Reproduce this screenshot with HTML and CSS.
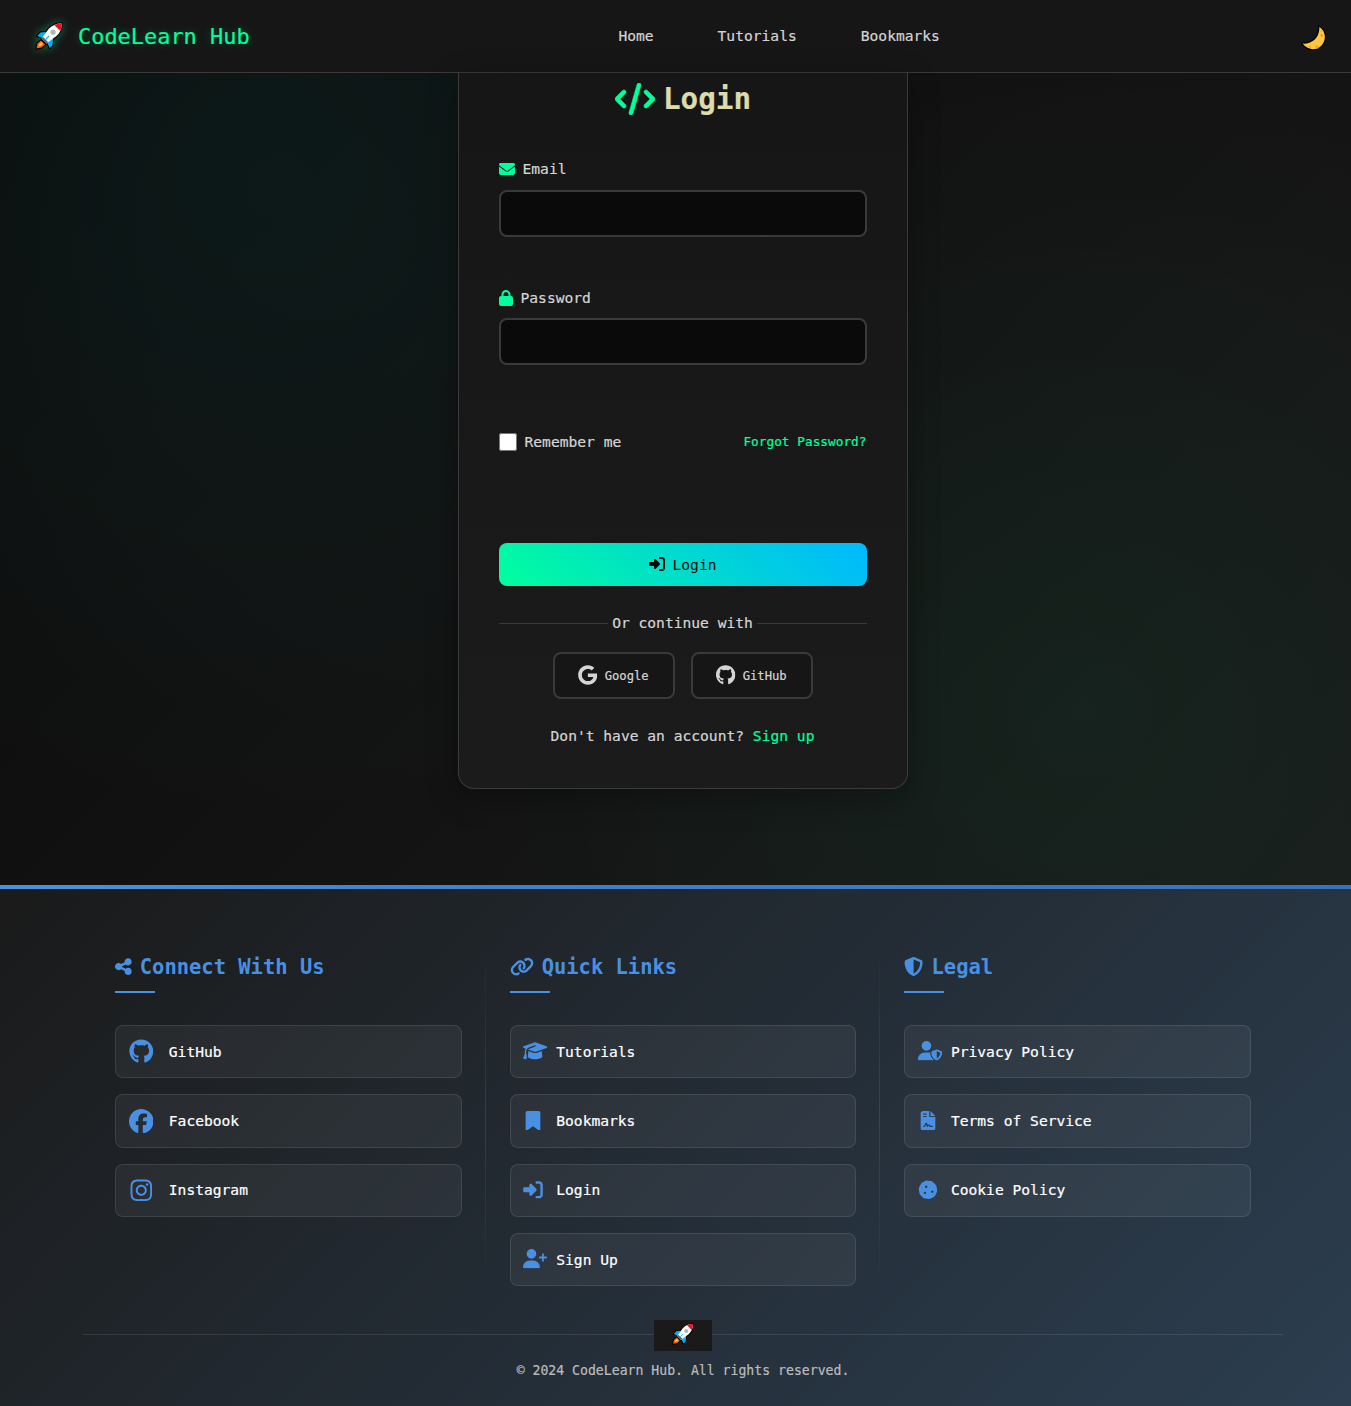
FILE: index.html
```html
<!DOCTYPE html>
<html lang="en">
<head>
<meta charset="utf-8">
<title>Login - CodeLearn Hub</title>
<link rel="stylesheet" href="styles.css">
</head>
<body>
<svg class="sprite" aria-hidden="true">
  <symbol id="rocket" viewBox="0 0 28 28">
    <g stroke="#000" stroke-width="2.4" stroke-linejoin="round">
      <path fill="#00a9ea" d="M10 10L5.5 10.5L2.2 14L6.5 15.5L12.5 21.5L14.8 26L17.5 23.2L18 17z"/>
      <path fill="#f7630c" d="M6 18.5L2.5 21.5L1.5 26.5L6.5 25.5L10 22.5z"/>
      <path fill="#fff" d="M26.6 1.4C21 1.2 17.5 3.2 14 6.5L6.5 16.5L11.5 21.5L21.5 14C25 10.5 26.8 7 26.6 1.4z"/>
    </g>
    <path fill="#00b3f0" d="M10 10L5.5 10.5L2.2 14L6.5 15.5L12.5 21.5L14.8 26L17.5 23.2L18 17z"/>
    <path fill="#f7630c" d="M6 18.5L2.5 21.5L1.5 26.5L6.5 25.5L10 22.5z"/>
    <path fill="#ffc83d" d="M6.5 20L4.2 22L3.6 24.4L6 23.8L8 21.8z"/>
    <path fill="#fff" d="M26.6 1.4C21 1.2 17.5 3.2 14 6.5L6.5 16.5L11.5 21.5L21.5 14C25 10.5 26.8 7 26.6 1.4z"/>
    <path fill="#e81224" d="M26.6 1.4C23.5 1.3 21.2 1.9 19.2 3L25 8.8C26.2 6.5 26.7 4.3 26.6 1.4z"/>
    <path fill="#55606b" d="M7.8 14.8L6.5 16.5L11.5 21.5L13.2 20.2z"/>
    <circle cx="18" cy="10.2" r="2.6" fill="#b4b4b4"/>
    <path stroke="#00b3f0" stroke-width="1.1" d="M10.5 17.5L14.2 13.8"/>
  </symbol>
  <symbol id="moon" viewBox="0 0 26 26">
    <path fill="#ffc83d" stroke="#000" stroke-width="2.6" stroke-linejoin="round" paint-order="stroke" d="M18.4 1.8C23.5 5.5 25.2 11.500 22.800 17C19.500 24.800 8.500 27.500 1.500 18.500C8 19.500 18.800 15 18.400 1.800z"/>
    <g fill="#f5a30f"><circle cx="20.700" cy="10.300" r="1.500"/><circle cx="20" cy="6.200" r=".8"/><circle cx="16.200" cy="22" r="1.800"/><circle cx="9" cy="21.600" r="1.100"/></g>
  </symbol>
  <symbol id="code" viewBox="0 0 640 512"><path d="M392.8 1.2c-17-4.9-34.7 5-39.6 22l-128 448c-4.9 17 5 34.700 22 39.600s34.700-5 39.600-22l128-448c4.900-17-5-34.700-22-39.600zm80.600 120.100c-12.500 12.500-12.500 32.800 0 45.300L562.700 256l-89.400 89.400c-12.500 12.500-12.500 32.800 0 45.300s32.800 12.500 45.300 0l112-112c12.500-12.500 12.500-32.800 0-45.300l-112-112c-12.500-12.500-32.800-12.500-45.300 0zm-306.700 0c-12.500-12.500-32.800-12.500-45.300 0l-112 112c-12.500 12.500-12.500 32.800 0 45.300l112 112c12.500 12.500 32.800 12.500 45.300 0s12.500-32.800 0-45.300L77.300 256l89.400-89.400c12.500-12.500 12.500-32.800 0-45.300z"/></symbol>
  <symbol id="envelope" viewBox="0 0 512 512"><path d="M48 64C21.5 64 0 85.5 0 112c0 15.1 7.1 29.3 19.2 38.4L236.8 313.6c11.4 8.5 27 8.5 38.4 0L492.8 150.4c12.1-9.1 19.2-23.3 19.2-38.4c0-26.5-21.5-48-48-48H48zM0 176V384c0 35.3 28.7 64 64 64H448c35.3 0 64-28.7 64-64V176L294.4 339.2c-22.8 17.1-54 17.1-76.8 0L0 176z"/></symbol>
  <symbol id="lock" viewBox="0 0 448 512"><path d="M144 144v48H304V144c0-44.2-35.8-80-80-80s-80 35.8-80 80zM80 192V144C80 64.5 144.5 0 224 0s144 64.5 144 144v48h16c35.3 0 64 28.7 64 64V448c0 35.3-28.7 64-64 64H64c-35.3 0-64-28.7-64-64V256c0-35.3 28.7-64 64-64H80z"/></symbol>
  <symbol id="signin" viewBox="0 0 512 512"><path d="M217.9 105.9L340.7 228.7c7.2 7.2 11.3 17.1 11.3 27.3s-4.1 20.1-11.3 27.3L217.9 406.1c-6.4 6.4-15 9.900-24 9.900c-18.700 0-33.900-15.200-33.900-33.900l0-62.100L32 320c-17.700 0-32-14.300-32-32l0-64c0-17.700 14.300-32 32-32l128 0 0-62.100c0-18.700 15.200-33.900 33.900-33.900c9 0 17.600 3.600 24 9.900zM352 416l64 0c17.700 0 32-14.300 32-32l0-256c0-17.700-14.300-32-32-32l-64 0c-17.700 0-32-14.300-32-32s14.300-32 32-32l64 0c53 0 96 43 96 96l0 256c0 53-43 96-96 96l-64 0c-17.700 0-32-14.300-32-32s14.300-32 32-32z"/></symbol>
  <symbol id="google" viewBox="0 0 488 512"><path d="M488 261.8C488 403.3 391.1 504 248 504 110.8 504 0 393.2 0 256S110.8 8 248 8c66.8 0 123 24.5 166.3 64.9l-67.5 64.9C258.5 52.6 94.3 116.6 94.3 256c0 86.5 69.1 156.6 153.7 156.6 98.2 0 135-70.4 140.8-106.9H248v-85.3h236.1c2.3 12.7 3.9 24.9 3.9 41.4z"/></symbol>
  <symbol id="github" viewBox="0 0 496 512"><path d="M165.9 397.4c0 2-2.3 3.6-5.2 3.6-3.3.3-5.6-1.3-5.6-3.6 0-2 2.3-3.6 5.2-3.6 3-.3 5.6 1.3 5.6 3.6zm-31.1-4.5c-.7 2 1.3 4.3 4.3 4.9 2.6 1 5.6 0 6.2-2s-1.3-4.3-4.3-5.2c-2.6-.7-5.5.3-6.2 2.3zm44.2-1.7c-2.9.7-4.9 2.6-4.6 4.9.3 2 2.9 3.3 5.9 2.6 2.9-.7 4.9-2.6 4.6-4.6-.3-1.9-3-3.2-5.9-2.9zM244.8 8C106.1 8 0 113.3 0 252c0 110.9 69.8 205.8 169.5 239.2 12.8 2.3 17.3-5.6 17.3-12.1 0-6.2-.3-40.4-.3-61.4 0 0-70 15-84.7-29.8 0 0-11.4-29.1-27.8-36.6 0 0-22.9-15.7 1.6-15.4 0 0 24.9 2 38.6 25.8 21.9 38.6 58.6 27.5 72.9 20.9 2.3-16 8.8-27.1 16-33.7-55.9-6.2-112.3-14.3-112.3-110.5 0-27.5 7.6-41.3 23.6-58.9-2.6-6.5-11.1-33.3 2.6-67.9 20.9-6.5 69 27 69 27 20-5.6 41.5-8.5 62.8-8.5s42.8 2.9 62.8 8.5c0 0 48.1-33.6 69-27 13.7 34.7 5.2 61.4 2.6 67.9 16 17.7 25.8 31.5 25.8 58.9 0 96.5-58.9 104.2-114.8 110.5 9.2 7.9 17 22.9 17 46.4 0 33.7-.3 75.4-.3 83.6 0 6.5 4.6 14.4 17.3 12.1C428.2 457.8 496 362.9 496 252 496 113.3 383.5 8 244.8 8zM97.2 352.9c-1.3 1-1 3.3.7 5.2 1.6 1.6 3.9 2.3 5.2 1 1.3-1 1-3.3-.7-5.2-1.6-1.6-3.9-2.3-5.2-1zm-10.8-8.1c-.7 1.3.3 2.9 2.3 3.9 1.6 1 3.6.7 4.3-.7.7-1.3-.3-2.9-2.3-3.9-2-.6-3.6-.3-4.3.7zm32.4 35.6c-1.6 1.3-1 4.3 1.3 6.2 2.3 2.3 5.2 2.6 6.5 1 1.3-1.3.7-4.3-1.3-6.2-2.2-2.3-5.2-2.6-6.5-1zm-11.4-14.7c-1.6 1-1.6 3.6 0 5.9 1.6 2.3 4.3 3.3 5.6 2.3 1.6-1.3 1.6-3.9 0-6.2-1.4-2.3-4-3.3-5.6-2z"/></symbol>
  <symbol id="facebook" viewBox="0 0 512 512"><path d="M512 256C512 114.6 397.4 0 256 0S0 114.6 0 256C0 376 82.7 476.8 194.2 504.5V334.2H141.4V256h52.8V222.3c0-87.1 39.4-127.5 125-127.5c16.2 0 44.2 3.2 55.7 6.4V172c-6-.6-16.5-1-29.6-1c-42 0-58.2 15.9-58.2 57.2V256h83.6l-14.4 78.2H287V510.1C413.8 494.8 512 386.9 512 256h0z"/></symbol>
  <symbol id="instagram" viewBox="0 0 448 512"><path d="M224.1 141c-63.6 0-114.9 51.3-114.9 114.9s51.3 114.9 114.9 114.9S339 319.5 339 255.9 287.7 141 224.1 141zm0 189.6c-41.1 0-74.7-33.5-74.7-74.7s33.5-74.7 74.7-74.7 74.7 33.5 74.7 74.7-33.6 74.7-74.7 74.7zm146.4-194.3c0 14.9-12 26.8-26.8 26.8-14.9 0-26.8-12-26.8-26.8s12-26.8 26.8-26.8 26.8 12 26.8 26.8zm76.1 27.2c-1.7-35.9-9.900-67.700-36.200-93.900-26.200-26.200-58-34.400-93.900-36.200-37-2.100-147.900-2.100-184.900 0-35.800 1.700-67.600 9.900-93.900 36.100s-34.400 58-36.200 93.900c-2.100 37-2.100 147.900 0 184.900 1.700 35.900 9.900 67.700 36.200 93.900s58 34.400 93.900 36.200c37 2.100 147.900 2.100 184.900 0 35.900-1.700 67.700-9.900 93.900-36.200 26.200-26.200 34.400-58 36.200-93.900 2.100-37 2.100-147.800 0-184.800zM398.800 388c-7.800 19.600-22.900 34.700-42.600 42.600-29.500 11.700-99.500 9-132.100 9s-102.700 2.600-132.100-9c-19.600-7.800-34.700-22.900-42.600-42.600-11.700-29.500-9-99.500-9-132.100s-2.600-102.700 9-132.100c7.800-19.600 22.900-34.700 42.600-42.600 29.500-11.700 99.500-9 132.100-9s102.700-2.600 132.100 9c19.600 7.800 34.700 22.900 42.600 42.600 11.700 29.500 9 99.500 9 132.100s2.700 102.700-9 132.100z"/></symbol>
  <symbol id="share" viewBox="0 0 448 512"><path d="M352 224c53 0 96-43 96-96s-43-96-96-96s-96 43-96 96c0 4 .2 8 .7 11.9l-94.1 47C145.4 170.2 121.9 160 96 160c-53 0-96 43-96 96s43 96 96 96c25.9 0 49.4-10.2 66.6-26.9l94.1 47c-.5 3.9-.7 7.8-.7 11.9c0 53 43 96 96 96s96-43 96-96s-43-96-96-96c-25.9 0-49.4 10.2-66.6 26.9l-94.1-47c.5-3.9 .7-7.8 .7-11.9s-.2-8-.7-11.9l94.1-47C302.6 213.8 326.1 224 352 224z"/></symbol>
  <symbol id="link" viewBox="0 0 640 512"><path d="M579.8 267.7c56.5-56.5 56.5-148 0-204.5c-50-50-128.8-56.5-186.3-15.4l-1.6 1.1c-14.4 10.3-17.7 30.3-7.4 44.6s30.3 17.7 44.6 7.4l1.6-1.1c32.1-22.9 76-19.3 103.8 8.6c31.5 31.5 31.5 82.5 0 114L422.3 334.8c-31.5 31.5-82.5 31.5-114 0c-27.9-27.9-31.5-71.8-8.6-103.8l1.1-1.6c10.3-14.4 6.9-34.4-7.4-44.6s-34.4-6.9-44.6 7.4l-1.1 1.6C206.5 251.2 213 330 263 380c56.5 56.5 148 56.5 204.5 0L579.8 267.7zM60.2 244.3c-56.5 56.5-56.5 148 0 204.5c50 50 128.8 56.5 186.3 15.4l1.6-1.1c14.4-10.3 17.7-30.3 7.4-44.6s-30.3-17.7-44.6-7.4l-1.6 1.1c-32.1 22.9-76 19.3-103.8-8.6C74 372 74 321 105.5 289.5L217.7 177.2c31.5-31.5 82.5-31.5 114 0c27.9 27.9 31.5 71.8 8.6 103.9l-1.1 1.6c-10.3 14.4-6.9 34.4 7.4 44.6s34.4 6.9 44.6-7.4l1.1-1.6C433.5 260.8 427 182 377 132c-56.5-56.5-148-56.5-204.5 0L60.2 244.3z"/></symbol>
  <symbol id="shield" viewBox="0 0 512 512"><path d="M256 0c4.600 0 9.200 1 13.400 2.900L457.700 82.800c22 9.300 38.400 31 38.300 57.200c-.5 99.200-41.300 280.700-213.600 363.200c-16.700 8-36.100 8-52.800 0C57.300 420.700 16.500 239.200 16 140c-.1-26.200 16.300-47.900 38.300-57.200L242.700 2.900C246.800 1 251.400 0 256 0zm0 66.800V444.800C394 378 431.100 230.100 432 141.400L256 66.800l0 0z"/></symbol>
  <symbol id="cap" viewBox="0 0 640 512"><path d="M320 32c-8.1 0-16.1 1.4-23.7 4.1L15.8 137.4C6.3 140.9 0 149.9 0 160s6.3 19.1 15.8 22.6l57.9 20.9C57.3 229.3 48 259.8 48 291.9v28.1c0 28.4-10.8 57.7-22.3 80.8c-6.5 13-13.9 25.8-22.5 37.6C0 442.7-.9 448.3 .9 453.4s6 8.9 11.2 10.2l64 16c4.2 1.1 8.7 .3 12.4-2s6.3-6.1 7.1-10.4c8.6-42.8 4.3-81.2-2.1-108.7C90.3 344.3 86 329.8 80 316.5V291.9c0-30.2 10.2-58.7 27.9-81.5c12.9-15.5 29.6-28 49.2-35.7l157-61.7c8.2-3.2 17.5 .8 20.7 9s-.8 17.5-9 20.7l-157 61.7c-12.4 4.9-23.3 12.4-32.2 21.6l159.6 57.6c7.6 2.7 15.6 4.1 23.7 4.1s16.1-1.4 23.7-4.1L624.2 182.6c9.5-3.4 15.8-12.5 15.8-22.6s-6.3-19.1-15.8-22.6L343.7 36.1C336.1 33.4 328.1 32 320 32zM128 408c0 35.3 86 72 192 72s192-36.7 192-72L496.7 262.6 354.5 314c-11.1 4-22.8 6-34.5 6s-23.5-2-34.5-6L143.3 262.6 128 408z"/></symbol>
  <symbol id="bookmark" viewBox="0 0 384 512"><path d="M0 48V487.7C0 501.1 10.9 512 24.3 512c5 0 9.9-1.5 14-4.4L192 400 345.7 507.6c4.1 2.9 9 4.4 14 4.4c13.4 0 24.3-10.9 24.3-24.3V48c0-26.5-21.5-48-48-48H48C21.5 0 0 21.5 0 48z"/></symbol>
  <symbol id="userplus" viewBox="0 0 640 512"><path d="M96 128a128 128 0 1 1 256 0A128 128 0 1 1 96 128zM0 482.3C0 383.8 79.8 304 178.3 304h91.4C368.2 304 448 383.8 448 482.3c0 16.4-13.3 29.7-29.7 29.7H29.7C13.3 512 0 498.7 0 482.3zM504 312V248H440c-13.3 0-24-10.7-24-24s10.7-24 24-24h64V136c0-13.3 10.7-24 24-24s24 10.7 24 24v64h64c13.3 0 24 10.7 24 24s-10.7 24-24 24H552v64c0 13.3-10.7 24-24 24s-24-10.7-24-24z"/></symbol>
  <symbol id="usershield" viewBox="0 0 640 512"><path d="M224 256A128 128 0 1 0 224 0a128 128 0 1 0 0 256zm-45.7 48C79.8 304 0 383.8 0 482.3C0 498.7 13.3 512 29.7 512l388.6 0c1.8 0 3.5-.2 5.3-.5c-76.3-55.1-99.8-141-103.1-200.2c-16.1-4.8-33.1-7.3-50.7-7.3l-91.4 0zm308.8-78.3l-120 48C358 277.4 352 286.2 352 296c0 63.3 25.9 168.8 134.8 214.2c5.9 2.5 12.6 2.5 18.5 0C614.1 464.8 640 359.3 640 296c0-9.8-6-18.6-15.1-22.3l-120-48c-5.7-2.3-12.1-2.3-17.8 0zM591.4 312c-3.900 50.700-27.200 116.700-95.400 149.700l0-187.800L591.400 312z"/></symbol>
  <symbol id="contract" viewBox="0 0 384 512"><path d="M64 0C28.7 0 0 28.7 0 64V448c0 35.3 28.7 64 64 64H320c35.3 0 64-28.7 64-64V160H256c-17.7 0-32-14.3-32-32V0H64zM256 0V128H384L256 0zM80 64h64c8.8 0 16 7.2 16 16s-7.2 16-16 16H80c-8.8 0-16-7.2-16-16s7.2-16 16-16zm0 64h64c8.8 0 16 7.2 16 16s-7.2 16-16 16H80c-8.8 0-16-7.2-16-16s7.2-16 16-16zm54.2 253.8c-6.1 20.3-24.8 34.2-46 34.2H80c-8.8 0-16-7.2-16-16s7.2-16 16-16h8.2c7.1 0 13.3-4.6 15.3-11.4l14.9-49.5c3.4-11.3 13.8-19.1 25.6-19.1s22.2 7.7 25.6 19.1l11.6 38.6c7.4-6.2 16.8-9.7 26.8-9.7c15.9 0 30.4 9 37.5 23.2l4.4 8.8H304c8.8 0 16 7.2 16 16s-7.2 16-16 16H240c-6.1 0-11.6-3.4-14.3-8.8l-8.8-17.7c-1.7-3.4-5.1-5.5-8.8-5.5s-7.2 2.1-8.8 5.5l-8.8 17.7c-2.9 5.9-9.2 9.4-15.7 8.8s-12.1-5.1-13.9-11.3L144 349l-9.8 32.8z"/></symbol>
  <symbol id="cookie" viewBox="0 0 512 512"><path d="M247.2 17c-22.1-3.1-44.6 .9-64.4 11.4l-74 39.5C89.1 78.4 73.2 94.9 63.4 115L26.7 190.6c-9.8 20.1-13 42.9-9.1 64.9l14.5 82.8c3.9 22.1 14.6 42.3 30.7 57.9l60.3 58.4c16.1 15.6 36.6 25.6 58.7 28.7l83 11.7c22.1 3.1 44.6-.9 64.4-11.4l74-39.5c19.7-10.5 35.6-27 45.4-47.2l36.7-75.5c9.8-20.1 13-42.9 9.1-64.9l-14.6-82.8c-3.9-22.1-14.6-42.3-30.7-57.9L388.9 57.500c-16.100-15.600-36.600-25.600-58.700-28.700L247.200 17zM208 144a32 32 0 1 1 0 64 32 32 0 1 1 0-64zM144 336a32 32 0 1 1 64 0 32 32 0 1 1 -64 0zm224-64a32 32 0 1 1 0 64 32 32 0 1 1 0-64z"/></symbol>
</svg>

<div class="page">
  <header class="topbar">
    <a class="brand"><svg class="brand-icon"><use href="#rocket"/></svg><span class="brand-name">CodeLearn Hub</span></a>
    <nav class="nav"><a>Home</a><a>Tutorials</a><a>Bookmarks</a></nav>
    <button class="theme" aria-label="Toggle theme"><svg class="moon"><use href="#moon"/></svg></button>
  </header>

  <main class="main">
    <form class="card">
      <h1 class="title"><svg class="title-icon"><use href="#code"/></svg>Login</h1>
      <div class="field">
        <label class="label" for="email"><svg class="i16"><use href="#envelope"/></svg>Email</label>
        <input class="input" id="email" type="email">
      </div>
      <div class="field">
        <label class="label" for="password"><svg class="i14"><use href="#lock"/></svg>Password</label>
        <input class="input" id="password" type="password">
      </div>
      <div class="options">
        <label class="remember"><input class="check" type="checkbox">Remember me</label>
        <a class="forgot">Forgot Password?</a>
      </div>
      <button class="submit" type="button"><svg class="i16"><use href="#signin"/></svg><span class="btn-text">Login</span></button>
      <div class="divider"><span>Or continue with</span></div>
      <div class="social">
        <button class="social-btn" type="button"><svg class="social-icon"><use href="#google"/></svg><span class="btn-text">Google</span></button>
        <button class="social-btn" type="button"><svg class="social-icon"><use href="#github"/></svg><span class="btn-text">GitHub</span></button>
      </div>
      <p class="signup">Don't have an account? <a>Sign up</a></p>
    </form>
  </main>
</div>

<footer class="footer">
  <div class="accent"></div>
  <div class="columns">
    <section class="column">
      <h2 class="heading"><svg class="h-share"><use href="#share"/></svg>Connect With Us</h2>
      <a class="item item-social"><span class="slot"><svg class="big"><use href="#github"/></svg></span>GitHub</a>
      <a class="item item-social"><span class="slot"><svg class="big"><use href="#facebook"/></svg></span>Facebook</a>
      <a class="item item-social"><span class="slot"><svg class="big"><use href="#instagram"/></svg></span>Instagram</a>
    </section>
    <section class="column">
      <h2 class="heading"><svg class="h-link"><use href="#link"/></svg>Quick Links</h2>
      <a class="item"><span class="slot"><svg class="wide"><use href="#cap"/></svg></span>Tutorials</a>
      <a class="item"><span class="slot"><svg class="regular"><use href="#bookmark"/></svg></span>Bookmarks</a>
      <a class="item"><span class="slot"><svg class="regular"><use href="#signin"/></svg></span>Login</a>
      <a class="item"><span class="slot"><svg class="wide"><use href="#userplus"/></svg></span>Sign Up</a>
    </section>
    <section class="column">
      <h2 class="heading"><svg class="h-shield"><use href="#shield"/></svg>Legal</h2>
      <a class="item"><span class="slot"><svg class="wide"><use href="#usershield"/></svg></span>Privacy Policy</a>
      <a class="item"><span class="slot"><svg class="regular"><use href="#contract"/></svg></span>Terms of Service</a>
      <a class="item"><span class="slot"><svg class="regular"><use href="#cookie"/></svg></span>Cookie Policy</a>
    </section>
  </div>
  <div class="bottom">
    <div class="badge"><svg class="badge-icon"><use href="#rocket"/></svg></div>
    <p class="copy">© 2024 CodeLearn Hub. All rights reserved.</p>
  </div>
</footer>
</body>
</html>
```

FILE: styles.css
```css
* { box-sizing: border-box; margin: 0; padding: 0; }

:root {
  --green: #00ff9d;
  --blue: #4a90e2;
  --line: #3a3a3a;
  --text: #d4d4d4;
}

body {
  background: #0a0a0a;
  color: var(--text);
  font-family: "DejaVu Sans Mono", "Liberation Mono", monospace;
  font-size: 14.62px;
  line-height: 20px;
  -webkit-text-stroke: .2px;
}

svg { display: block; flex: none; fill: currentColor; }
button { font: inherit; color: inherit; background: none; border: 0; }
.sprite { position: absolute; width: 0; height: 0; }
.i16 { width: 16px; height: 16px; }
.i14 { width: 14px; height: 16px; }

.page {
  height: 885px;
  background:
    radial-gradient(circle at 20% 20%, rgba(0, 220, 210, .06), transparent 50%),
    radial-gradient(circle at 80% 80%, rgba(0, 255, 157, .05), transparent 50%),
    linear-gradient(135deg, #0a0a0a, #1a1a1a);
}

/* Header */
.topbar {
  display: grid;
  grid-template-columns: 583.9px auto 1fr;
  align-items: center;
  height: 73px;
  padding: 0 24px 0 34.5px;
  background: #161616;
  border-bottom: 1px solid var(--line);
}
.brand {
  display: flex;
  align-items: center;
  gap: 15.5px;
  color: var(--green);
  font-size: 21.93px;
  line-height: 30px;
  text-shadow: 0 0 10px rgba(0, 255, 157, .25);
}
.brand-name { margin-top: 2px; }
.brand-icon { width: 28px; height: 28px; margin-top: -1px; filter: drop-shadow(0 0 4px rgba(0, 255, 157, .4)); }
.nav { display: flex; gap: 64px; }
.theme { justify-self: end; }
.moon { width: 26px; height: 26px; margin-top: 3px; }

/* Login card */
.main { display: flex; justify-content: center; padding-left: 14px; }
.card {
  width: 450px;
  height: 716px;
  padding: 7px 40px 0;
  background: linear-gradient(#161616, #1b1b1b);
  border: 1px solid var(--line);
  border-top: 0;
  border-radius: 0 0 16px 16px;
  box-shadow: 0 8px 32px rgba(0, 0, 0, .3);
}
.title {
  display: flex;
  align-items: center;
  justify-content: center;
  gap: 8px;
  height: 38px;
  margin: 0 -1px 41px 0;
  color: #dcdcaa;
  font-size: 29.24px;
}
.title-icon { width: 40px; height: 32px; color: var(--green); stroke: currentColor; stroke-width: 10; overflow: visible; }
.field { height: 128px; }
.field + .field { height: 128.8px; }
.label { display: flex; align-items: center; gap: 8px; height: 20px; margin-bottom: 11px; }
.label svg { color: var(--green); }
.field + .field .label { padding-top: 1px; height: 21px; margin-bottom: 10px; }
.input {
  display: block;
  width: 100%;
  height: 47px;
  background: #0a0a0a;
  border: 2px solid var(--line);
  border-radius: 8px;
}
.options {
  display: flex;
  align-items: center;
  justify-content: space-between;
  height: 20px;
  margin: 16px 0 91px;
}
.remember { display: flex; align-items: center; gap: 8px; }
.check { width: 18px; height: 18px; }
.forgot { color: var(--green); font-size: 12.79px; }
.submit {
  display: flex;
  align-items: center;
  justify-content: center;
  gap: 8px;
  width: 100%;
  height: 43px;
  color: #0a0a0a;
  background: linear-gradient(45deg, #00ff9d, #00b8ff);
  border-radius: 8px;
  -webkit-text-stroke: 0;
}
.btn-text { padding-top: 2px; }
.divider { display: flex; align-items: center; gap: 4px; height: 20px; margin: 27px 0 19px; }
.divider::before, .divider::after { content: ""; flex: 1; height: 1px; margin-top: 1px; background: var(--line); }
.social { display: flex; justify-content: center; gap: 16px; }
.social-btn {
  display: flex;
  align-items: center;
  justify-content: center;
  gap: 7px;
  width: 122px;
  height: 47px;
  background: #161616;
  border: 2px solid var(--line);
  border-radius: 8px;
  font-size: 12.18px;
}
.social-icon { width: 19.4px; height: 20px; }
.signup { margin-top: 27px; text-align: center; }
.signup a { color: var(--green); }

/* Footer */
.footer {
  height: 521px;
  background: linear-gradient(135deg, #1a1a1a, #2c3e50);
}
.accent { height: 4px; background: linear-gradient(90deg, #4a90e2, #3f7fcb 40%, #3872b8); }
.columns { display: grid; grid-template-columns: repeat(3, 1fr); gap: 48px; margin: 60px 68px 0 83px; padding: 0 32px; }
.column { position: relative; display: flex; flex-direction: column; gap: 16px; height: 337px; }
.column:not(:last-child)::after {
  content: "";
  position: absolute;
  top: 0;
  right: -24px;
  width: 1px;
  height: 100%;
  background: linear-gradient(transparent, rgba(255, 255, 255, .1), transparent);
}
.heading {
  position: relative;
  display: flex;
  flex: none;
  align-items: center;
  gap: 8px;
  height: 44px;
  padding-bottom: 8px;
  margin-bottom: 16px;
  color: var(--blue);
  font-size: 20.47px;
  -webkit-text-stroke: 0;
}
.heading::after {
  content: "";
  position: absolute;
  left: 0;
  bottom: 0;
  width: 40px;
  height: 2px;
  background: var(--blue);
}
.h-share { width: 16.8px; height: 19.2px; }
.h-link { width: 24px; height: 19.2px; }
.h-shield { width: 19.2px; height: 19.2px; }
.item {
  display: flex;
  flex: none;
  align-items: center;
  gap: 12.8px;
  height: 53.3px;
  padding: 0 12.8px;
  color: #fff;
  background: rgba(255, 255, 255, .05);
  border: 1px solid rgba(255, 255, 255, .1);
  border-radius: 8px;
}
.slot { display: flex; width: 20px; padding-bottom: 1px; color: var(--blue); }
.item-social { gap: 16px; }
.item-social .slot { width: 24px; padding-bottom: 0; justify-content: center; }
.big { width: 24.6px; height: 24.6px; }
.regular { width: 20px; height: 19.6px; }
.wide { width: 24.2px; height: 19.4px; }
.bottom {
  display: flex;
  flex-direction: column;
  align-items: center;
  margin: 48px 68px 0 83px;
  border-top: 1px solid rgba(255, 255, 255, .1);
}
.badge {
  display: flex;
  align-items: center;
  justify-content: center;
  width: 58px;
  height: 31px;
  margin-top: -15px;
  background: #1a1a1a;
}
.badge-icon { width: 22px; height: 22px; margin-top: -3px; }
.copy { margin-top: 10px; color: #bbb; font-size: 13.16px; }
```
